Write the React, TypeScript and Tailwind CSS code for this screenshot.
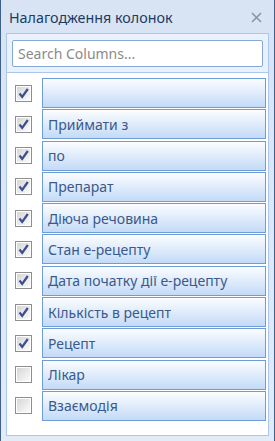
import React from "react";

const columns: { label: string; checked: boolean }[] = [
  { label: "", checked: true },
  { label: "Приймати з", checked: true },
  { label: "по", checked: true },
  { label: "Препарат", checked: true },
  { label: "Діюча речовина", checked: true },
  { label: "Стан е-рецепту", checked: true },
  { label: "Дата початку дії е-рецепту", checked: true },
  { label: "Кількість в рецепт", checked: true },
  { label: "Рецепт", checked: true },
  { label: "Лікар", checked: false },
  { label: "Взаємодія", checked: false },
];

function CheckBox({ checked }: { checked: boolean }) {
  return (
    <div className="w-[17px] h-[17px] border border-[#8e8e8e] bg-white p-px shrink-0">
      <div className="w-full h-full bg-gradient-to-br from-[#d6d6d6] to-[#fbfbfb] flex items-center justify-center">
        {checked && (
          <svg width="13" height="13" viewBox="0 0 13 13">
            <path
              d="M2.5 6.5 L5.2 10 L10.8 2"
              fill="none"
              stroke="#3a4f8b"
              strokeWidth="2.2"
              strokeLinejoin="miter"
            />
          </svg>
        )}
      </div>
    </div>
  );
}

export default function App() {
  return (
    <div
      className="w-[275px] h-[441px] flex flex-col bg-gradient-to-b from-[#d8e4f3] to-[#e2ebf8] border-x border-[#3f5f8c] overflow-hidden"
      style={{ fontFamily: '"Noto Sans", "Open Sans", sans-serif' }}
    >
      {/* Title bar */}
      <div className="h-[33px] flex items-center justify-between pl-2 pr-[12px] pt-[2px]">
        <span className="text-[14.3px] text-[#1d3a64]">Налагодження колонок</span>
        <svg width="11" height="11" viewBox="0 0 11 11">
          <path d="M1 1 L10 10 M10 1 L1 10" stroke="#8995a6" strokeWidth="1.6" />
        </svg>
      </div>

      {/* Panel */}
      <div className="mx-[5px] flex flex-col border border-[#abc7ee]">
        <div className="bg-[#e9f1fc] pt-[6px] pb-[5px] px-[5px] border-b border-[#abc7ee]">
          <input
            placeholder="Search Columns..."
            className="w-full h-[27px] rounded-[2px] border border-[#85a8d6] bg-white px-[5px] text-[14px] text-[#333] placeholder:text-[#8a8a8a] outline-none"
          />
        </div>
        <div className="bg-white flex flex-col gap-[1.3px] pt-[5px] pb-[14px] pl-[8px] pr-[2px]">
          {columns.map((c, i) => (
            <div key={i} className="flex items-center gap-[10px]">
              <CheckBox checked={c.checked} />
              <div className="flex-1 h-[30px] flex items-center px-[5px] border border-[#6d9cd6] bg-gradient-to-b from-[#fbfdff] to-[#c4daf7] text-[14px] text-[#3a5a8c] whitespace-nowrap overflow-hidden">
                {c.label}
              </div>
            </div>
          ))}
        </div>
      </div>
    </div>
  );
}
